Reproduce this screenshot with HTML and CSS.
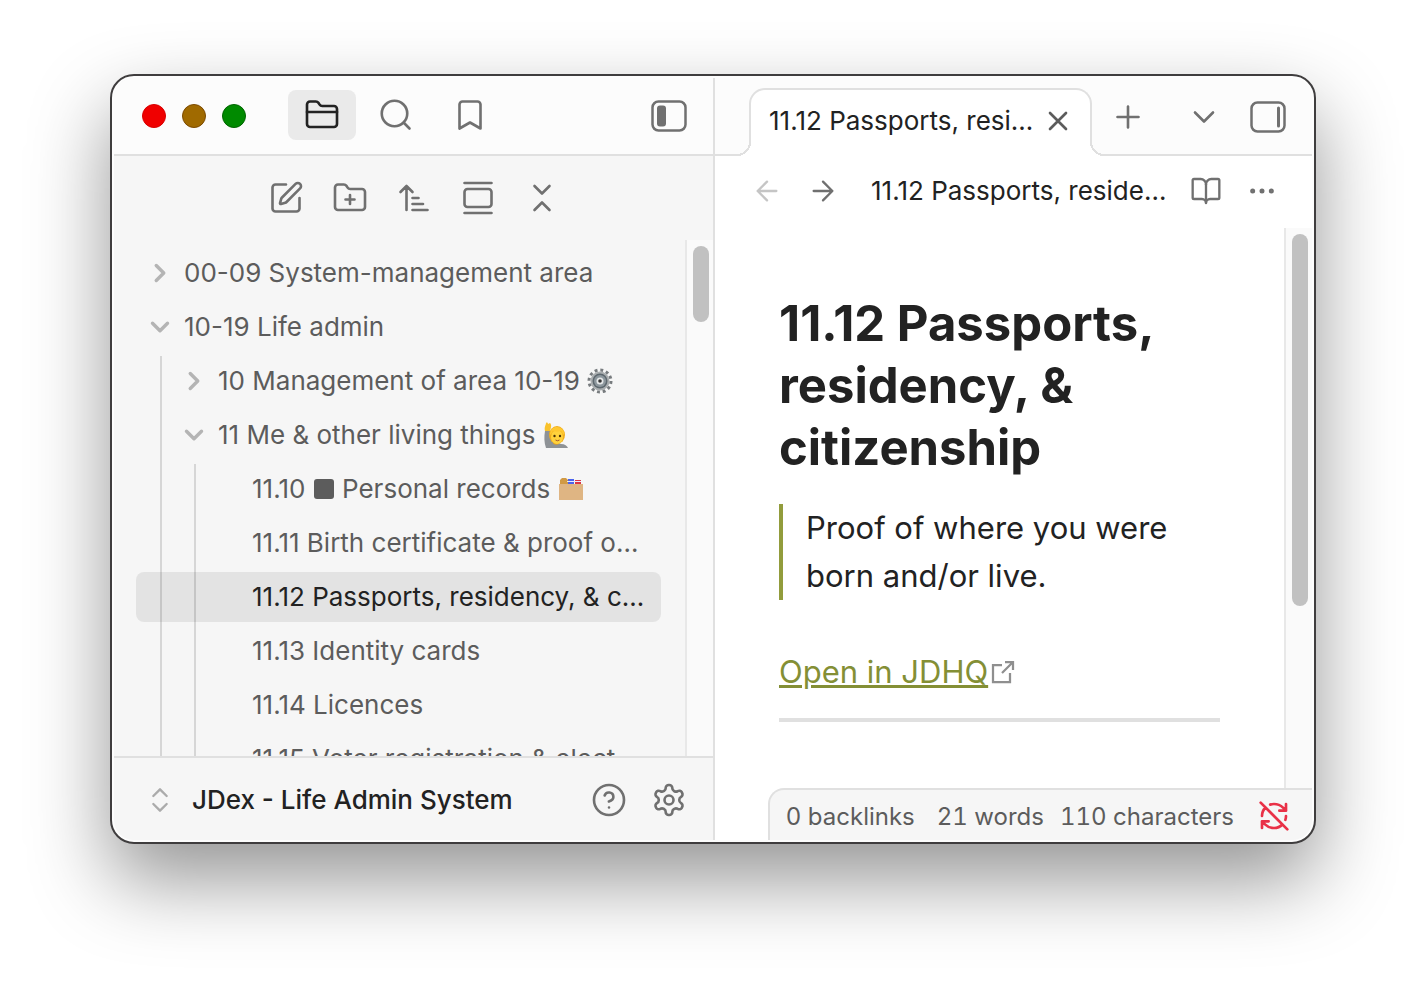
FILE: index.html
```html
<!DOCTYPE html>
<html lang="en">
<head>
<meta charset="utf-8">
<meta name="viewport" content="width=device-width, initial-scale=1">
<title>JDex - Life Admin System</title>
<link rel="stylesheet" href="styles.css">
</head>
<body>
<div class="window">
  <div class="workspace">
    <aside class="sidebar">
      <header class="bar sidebar-bar">
        <div class="lights">
          <button class="light light-close" aria-label="Close window"></button>
          <button class="light light-min" aria-label="Minimise window"></button>
          <button class="light light-zoom" aria-label="Zoom window"></button>
        </div>
        <nav class="panel-tabs" aria-label="Panels">
          <button class="panel-tab is-active" aria-label="Files"><svg class="icon" viewBox="0 0 24 24"><path d="M20 20a2 2 0 0 0 2-2V8a2 2 0 0 0-2-2h-7.900a2 2 0 0 1-1.690-.9L9.600 3.900A2 2 0 0 0 7.930 3H4a2 2 0 0 0-2 2v13a2 2 0 0 0 2 2Z"/><path d="M2 10h20"/></svg></button>
          <button class="panel-tab" aria-label="Search"><svg class="icon" viewBox="0 0 24 24"><circle cx="11" cy="11" r="8.500"/><path d="m21 21-3.800-3.800"/></svg></button>
          <button class="panel-tab" aria-label="Bookmarks"><svg class="icon" viewBox="0 0 24 24"><path d="m19 21-7-4-7 4V5a2 2 0 0 1 2-2h10a2 2 0 0 1 2 2v16z"/></svg></button>
        </nav>
        <button class="plain" aria-label="Collapse left sidebar"><svg class="icon-toggle" viewBox="0 0 36 32"><rect class="toggle-frame" x="1.500" y="1.500" width="33" height="29" rx="6"/><rect class="toggle-fill" x="6" y="5.500" width="9" height="21" rx="3"/></svg></button>
      </header>

      <div class="tools">
        <button class="plain" aria-label="New note"><svg class="icon" viewBox="0 0 24 24"><path d="M12 3H5a2 2 0 0 0-2 2v14a2 2 0 0 0 2 2h14a2 2 0 0 0 2-2v-7"/><path d="M18.375 2.625a2.121 2.121 0 1 1 3 3l-9.013 9.014a2 2 0 0 1-.853.505l-2.873.84a.5.5 0 0 1-.62-.62l.84-2.873a2 2 0 0 1 .506-.852z"/></svg></button>
        <button class="plain" aria-label="New folder"><svg class="icon" viewBox="0 0 24 24"><path d="M12 10v6M9 13h6"/><path d="M20 20a2 2 0 0 0 2-2V8a2 2 0 0 0-2-2h-7.900a2 2 0 0 1-1.690-.9L9.600 3.900A2 2 0 0 0 7.930 3H4a2 2 0 0 0-2 2v13a2 2 0 0 0 2 2Z"/></svg></button>
        <button class="plain" aria-label="Change sort order"><svg class="icon" viewBox="0 0 24 24"><path d="m3 8 4-4 4 4M7 4v16M11 12h4M11 16h7M11 20h10"/></svg></button>
        <button class="plain" aria-label="Auto-reveal current file"><svg class="icon" viewBox="0 0 24 24"><path d="M3 2h18M3 22h18"/><rect x="3" y="6" width="18" height="12" rx="2"/></svg></button>
        <button class="plain" aria-label="Collapse all"><svg class="icon" viewBox="0 0 24 24"><path d="m7 20 5-5 5 5M7 4l5 5 5-5"/></svg></button>
      </div>

      <div class="files">
        <ul class="tree">
          <li><button class="row"><svg class="chevron" viewBox="0 0 24 24"><path d="m9 18 6-6-6-6"/></svg><span class="label">00-09 System-management area</span></button></li>
          <li><button class="row"><svg class="chevron" viewBox="0 0 24 24"><path d="m6 9 6 6 6-6"/></svg><span class="label">10-19 Life admin</span></button>
            <ul class="branch level-1">
              <li><button class="row"><svg class="chevron" viewBox="0 0 24 24"><path d="m9 18 6-6-6-6"/></svg><span class="label">10 Management of area 10-19 <svg class="emoji" viewBox="0 0 26 26" role="img" aria-label="gear"><circle cx="13" cy="13" r="11" fill="none" stroke="#777b7e" stroke-width="3" stroke-dasharray="2.880 2.880"/><circle cx="13" cy="13" r="9.500" fill="#a9adaf"/><circle cx="13" cy="13" r="7.500" fill="#5d676e"/><circle cx="13" cy="13" r="6" fill="#8d979d"/><circle cx="13" cy="13" r="3.500" fill="#e6e8e9"/><circle cx="13" cy="13" r="1.800" fill="#333"/></svg></span></button></li>
              <li><button class="row"><svg class="chevron" viewBox="0 0 24 24"><path d="m6 9 6 6 6-6"/></svg><span class="label">11 Me &amp; other living things <svg class="emoji" viewBox="0 0 26 26" role="img" aria-label="person raising hand"><path d="M3 26C1 20 1 15 2 9l5-1c0 5 1 8 4 11l7 3c4 0 6 2 7 4z" fill="#8e9296"/><path d="M2 9C1 5 3 3 3 1c1-1 2 0 2 1l2-1c2 2 1 5 0 8z" fill="#f9c22b"/><path d="M10 17h6v5c-2 1-5 1-6-1z" fill="#e59c16"/><ellipse cx="14" cy="13" rx="8" ry="9" fill="#f0ad1c"/><ellipse cx="14" cy="15" rx="6" ry="7" fill="#ffd23c"/><path d="M7 13c0-6 3-8 7-8s8 3 7 8c-2-1-2-3-3-4-3 1-6 1-8 0-1 1-1 3-3 4z" fill="#ffc830"/><circle cx="11.500" cy="14" r="1.200" fill="#4a3208"/><circle cx="17" cy="14" r="1.200" fill="#4a3208"/><path d="M12.500 18q2 1.500 4 0" fill="none" stroke="#a0522d"/></svg></span></button>
                <ul class="branch level-2">
                  <li><a class="row" href="#11.10"><span class="label">11.10 <svg class="square" viewBox="0 0 20 20" role="img" aria-label="black square"><rect width="20" height="20" rx="3"/></svg> Personal records <svg class="emoji" viewBox="0 0 26 26" role="img" aria-label="card index dividers"><path d="M2 7V4l2-2h4l2 2v4H2z" fill="#d19a45"/><path d="M10 3h6v5h-6z" fill="#4a63ee"/><path d="M17 4h6v5h-6z" fill="#dc3545"/><path d="M9 5h14v1H9z" fill="#e8eafc"/><path d="M1 8h24v16H1z" fill="#dfb583"/></svg></span></a></li>
                  <li><a class="row" href="#11.11"><span class="label">11.11 Birth certificate &amp; proof o…</span></a></li>
                  <li><a class="row is-selected" href="#11.12" aria-current="page"><span class="label">11.12 Passports, residency, &amp; c…</span></a></li>
                  <li><a class="row" href="#11.13"><span class="label">11.13 Identity cards</span></a></li>
                  <li><a class="row" href="#11.14"><span class="label">11.14 Licences</span></a></li>
                  <li><a class="row" href="#11.15"><span class="label">11.15 Voter registration &amp; elect…</span></a></li>
                </ul>
              </li>
            </ul>
          </li>
        </ul>
        <div class="track"><div class="thumb thumb-files"></div></div>
      </div>

      <footer class="vault">
        <button class="vault-name"><svg class="icon-small icon-faint" viewBox="0 0 24 24"><path d="m7 15 5 5 5-5M7 9l5-5 5 5"/></svg><span class="label">JDex - Life Admin System</span></button>
        <button class="plain" aria-label="Help"><svg class="icon" viewBox="0 0 24 24"><circle cx="12" cy="12" r="10"/><path d="M9.090 9a3 3 0 0 1 5.830 1c0 2-3 3-3 3M12 17h.01"/></svg></button>
        <button class="plain" aria-label="Settings"><svg class="icon" viewBox="0 0 24 24"><path d="M12.220 2h-.44a2 2 0 0 0-2 2v.18a2 2 0 0 1-1 1.730l-.43.25a2 2 0 0 1-2 0l-.15-.08a2 2 0 0 0-2.730.73l-.22.38a2 2 0 0 0 .73 2.730l.15.1a2 2 0 0 1 1 1.720v.51a2 2 0 0 1-1 1.740l-.15.09a2 2 0 0 0-.73 2.730l.22.38a2 2 0 0 0 2.730.73l.15-.08a2 2 0 0 1 2 0l.43.25a2 2 0 0 1 1 1.730V20a2 2 0 0 0 2 2h.44a2 2 0 0 0 2-2v-.18a2 2 0 0 1 1-1.730l.43-.25a2 2 0 0 1 2 0l.15.08a2 2 0 0 0 2.730-.73l.22-.39a2 2 0 0 0-.73-2.730l-.15-.08a2 2 0 0 1-1-1.740v-.5a2 2 0 0 1 1-1.740l.15-.09a2 2 0 0 0 .73-2.730l-.22-.38a2 2 0 0 0-2.730-.73l-.15.08a2 2 0 0 1-2 0l-.43-.25a2 2 0 0 1-1-1.730V4a2 2 0 0 0-2-2z"/><circle cx="12" cy="12" r="3"/></svg></button>
      </footer>
    </aside>

    <main class="main">
      <header class="bar main-bar">
        <div class="tab">
          <span class="tab-title">11.12 Passports, resi…</span>
          <button class="plain tab-close" aria-label="Close tab"><svg class="icon-small" viewBox="0 0 24 24"><path d="M18 6 6 18M6 6l12 12"/></svg></button>
        </div>
        <button class="plain" aria-label="New tab"><svg class="icon" viewBox="0 0 24 24"><path d="M5 12h14M12 5v14"/></svg></button>
        <div class="bar-end">
          <button class="plain" aria-label="Tab list"><svg class="icon" viewBox="0 0 24 24"><path d="m6 9 6 6 6-6"/></svg></button>
          <button class="plain" aria-label="Expand right sidebar"><svg class="icon-toggle" viewBox="0 0 36 32"><rect class="toggle-frame" x="1.500" y="1.500" width="33" height="29" rx="6"/><rect class="toggle-fill" x="27" y="5.500" width="3" height="21" rx="1.500"/></svg></button>
        </div>
      </header>

      <div class="view-bar">
        <button class="plain is-disabled" aria-label="Back"><svg class="icon-small" viewBox="0 0 24 24"><path d="m12 19-7-7 7-7M19 12H5"/></svg></button>
        <button class="plain" aria-label="Forward"><svg class="icon-small" viewBox="0 0 24 24"><path d="M5 12h14M12 5l7 7-7 7"/></svg></button>
        <span class="view-title">11.12 Passports, reside…</span>
        <button class="plain" aria-label="Reading view"><svg class="icon-small" viewBox="0 0 24 24"><path d="M12 7v14"/><path d="M3 18a1 1 0 0 1-1-1V4a1 1 0 0 1 1-1h5a4 4 0 0 1 4 4 4 4 0 0 1 4-4h5a1 1 0 0 1 1 1v13a1 1 0 0 1-1 1h-6a3 3 0 0 0-3 3 3 3 0 0 0-3-3z"/></svg></button>
        <button class="plain" aria-label="More options"><svg class="icon-small" viewBox="0 0 24 24"><circle cx="5" cy="12" r="1"/><circle cx="12" cy="12" r="1"/><circle cx="19" cy="12" r="1"/></svg></button>
      </div>

      <div class="view">
        <article class="note">
          <h1>11.12 Passports, residency, &amp; citizenship</h1>
          <blockquote>Proof of where you were born and/or live.</blockquote>
          <p><a class="external" href="#jdhq">Open in JDHQ</a><svg class="icon-external" viewBox="0 0 24 24"><path d="M11 5H2v17h17v-9M14 2h8v8M22 2 11 13"/></svg></p>
          <hr>
        </article>
        <div class="track"><div class="thumb thumb-note"></div></div>
      </div>

      <div class="status">
        <span>0 backlinks</span>
        <span class="words">21 words</span>
        <span>110 characters</span>
        <button class="plain sync" aria-label="Sync is off"><svg class="icon-small" viewBox="0 0 24 24"><path d="M21 8l-2.260-2.260A9.750 9.750 0 0 0 12 3c-1 0-1.970.16-2.870.47M8 16H3v5M3 12c0-2.490 1-4.740 2.640-6.360M3 16l2.260 2.260A9.750 9.750 0 0 0 12 21c2.490 0 4.740-1 6.360-2.640M21 12c0 1-.16 1.970-.47 2.870M21 3v5h-5M22 22 2 2"/></svg></button>
      </div>
    </main>
  </div>
</div>
</body>
</html>
```

FILE: styles.css
```css
* { box-sizing: border-box; }

:root {
  --line: #e0e0e0;
  --bar: #fcfcfc;
  --panel: #f6f6f6;
  --text: #222;
  --muted: #5c5c5c;
  --icon: #707070;
  --faint: #ababab;
  --accent: #848f35;
}

body {
  margin: 0;
  min-height: 100vh;
  padding: 74px 110px 146px;
  display: flex;
  background: #fff;
  color: var(--text);
  font-family: Inter, "Liberation Sans", sans-serif;
  font-size: 26px;
}

button {
  border: 0;
  padding: 0;
  background: none;
  color: inherit;
  font: inherit;
  text-align: left;
}

a { color: inherit; text-decoration: none; }

ul { margin: 0; padding: 0; list-style: none; }

.window {
  flex: 1;
  min-width: 0;
  display: flex;
  padding: 2px;
  border: 2px solid #3f3d3e;
  border-radius: 24px;
  background: #fdfdfd;
  box-shadow: 0 36px 80px rgba(0, 0, 0, 0.42);
}

.workspace {
  flex: 1;
  min-width: 0;
  display: flex;
  overflow: hidden;
  border-radius: 20px;
}

/* Icons */
.icon, .icon-small, .chevron, .icon-external {
  display: block;
  flex: none;
  fill: none;
  stroke: currentColor;
  stroke-width: 1.75;
  stroke-linecap: round;
  stroke-linejoin: round;
}
.icon { width: 36px; height: 36px; }
.icon-small { width: 32px; height: 32px; }
.icon-faint { color: var(--faint); }
.icon-toggle { display: block; width: 36px; height: 32px; }
.toggle-frame { fill: none; stroke: currentColor; stroke-width: 2.5; }
.toggle-fill { fill: currentColor; }
.plain { flex: none; color: var(--icon); }

/* Sidebar */
.sidebar {
  flex: 0 1 601px;
  min-width: 0;
  display: flex;
  flex-direction: column;
  border-right: 2px solid var(--line);
  background: var(--panel);
}

.bar {
  flex: none;
  height: 78px;
  display: flex;
  align-items: center;
  border-bottom: 2px solid var(--line);
  background: var(--bar);
}

.sidebar-bar { padding: 0 26px 0 28px; }

.lights { display: flex; gap: 16px; }
.light { width: 24px; height: 24px; border-radius: 50%; border: 1px solid; }
.light-close { background: #f00000; border-color: #d80000; }
.light-min { background: #a06a00; border-color: #7c4a00; }
.light-zoom { background: #008a00; border-color: #006400; }

.panel-tabs { display: flex; gap: 6px; margin: 0 auto 2px 42px; }
.panel-tab { padding: 7px 16px; border-radius: 8px; color: var(--icon); }
.panel-tab.is-active { background: #eaeaea; color: var(--text); }

.tools {
  flex: none;
  height: 84px;
  display: flex;
  justify-content: center;
  align-items: center;
  gap: 28px;
}

.files {
  flex: 1;
  min-height: 0;
  display: flex;
  overflow: hidden;
  border-bottom: 2px solid var(--line);
}

.tree {
  flex: 1;
  min-width: 0;
  height: 0;
  padding: 8px 24px 0 22px;
}
.tree li + li, .branch { margin-top: 4px; }

.row {
  display: flex;
  align-items: center;
  width: 100%;
  height: 50px;
  padding-left: 9px;
  border-radius: 8px;
  color: var(--muted);
}
.row.is-selected { background: rgba(0, 0, 0, 0.075); color: var(--text); }
.chevron { width: 30px; height: 30px; margin-right: 9px; color: #b4b4b4; stroke-width: 2.75; }
.label { padding-bottom: 2px; white-space: nowrap; }
.level-1 .row { padding-left: 43px; }
.level-2 .row { padding-left: 116px; }

.branch { position: relative; }
.branch::before {
  content: "";
  position: absolute;
  top: 0;
  bottom: 0;
  left: 24px;
  width: 2px;
  background: rgba(0, 0, 0, 0.13);
}
.level-2::before { left: 58px; }

.emoji { width: 26px; height: 26px; vertical-align: -4px; }
.square { width: 20px; height: 20px; margin: 0 1px; vertical-align: -1px; fill: var(--muted); }

.track {
  flex: none;
  width: 28px;
  padding: 6px;
  border-left: 2px solid #e8e8e8;
  background: #fafafa;
}
.thumb { width: 16px; border-radius: 8px; background: #c1c1c1; }
.thumb-files { height: 15%; }

.vault {
  flex: none;
  height: 82px;
  display: flex;
  align-items: center;
  gap: 24px;
  padding: 2px 26px 0 30px;
}
.vault-name {
  flex: 1;
  display: flex;
  align-items: center;
  gap: 16px;
  font-weight: 500;
}

/* Main pane */
.main {
  flex: 1;
  min-width: 0;
  position: relative;
  display: flex;
  flex-direction: column;
  background: #fff;
}

.main-bar { padding: 2px 26px 0 34px; }

.tab {
  position: relative;
  align-self: stretch;
  flex: 0 1 343px;
  min-width: 0;
  display: flex;
  align-items: center;
  justify-content: space-between;
  margin: 8px 18px -2px 0;
  padding: 0 16px 4px 18px;
  border: 2px solid var(--line);
  border-bottom: 0;
  border-radius: 16px 16px 0 0;
  background: #fff;
}
.tab::before, .tab::after {
  content: "";
  position: absolute;
  bottom: 0;
  width: 14px;
  height: 14px;
}
.tab::before {
  left: -14px;
  background: radial-gradient(circle at 0 0, var(--bar) 12px, var(--line) 12px, var(--line) 14px, #fff 14px);
}
.tab::after {
  right: -14px;
  background: radial-gradient(circle at 100% 0, var(--bar) 12px, var(--line) 12px, var(--line) 14px, #fff 14px);
}
.tab-title, .view-title { padding-bottom: 2px; white-space: nowrap; overflow: hidden; }
.tab-close { color: var(--muted); }
.tab-close .icon-small { stroke-width: 2; }

.bar-end { display: flex; align-items: center; gap: 28px; margin-left: auto; }

.view-bar {
  flex: none;
  height: 72px;
  display: flex;
  align-items: center;
  gap: 24px;
  padding: 0 34px 2px 36px;
}
.view-title { flex: 1; margin-left: 8px; }
.is-disabled { opacity: 0.4; }

.view { flex: 1; min-height: 0; display: flex; overflow: hidden; }

.note {
  flex: 1;
  min-width: 0;
  padding: 65px 64px 0;
  font-size: 31px;
  line-height: 48px;
}
.note h1 {
  margin: 0 0 25px;
  font-size: 49px;
  line-height: 62px;
  font-weight: 700;
}
.note blockquote {
  margin: 0 0 48px;
  padding-left: 23px;
  border-left: 4px solid #929c3c;
}
.note p { display: flex; align-items: center; gap: 3px; margin: 0; }
.external {
  color: var(--accent);
  text-decoration: underline;
  text-decoration-thickness: 3px;
}
.icon-external {
  width: 24px;
  height: 24px;
  color: #8f8f8f;
  stroke-width: 2.25;
  stroke-linecap: butt;
  stroke-linejoin: miter;
}
.note hr { margin: 22px 0 0; border: 0; height: 4px; background: var(--line); }

.thumb-note { height: 62%; }

.status {
  position: absolute;
  right: 0;
  bottom: 0;
  height: 52px;
  display: flex;
  align-items: center;
  gap: 16px;
  padding: 2px 22px 0 16px;
  border: 2px solid var(--line);
  border-width: 2px 0 0 2px;
  border-radius: 16px 0 0 0;
  background: var(--panel);
  color: var(--muted);
  font-size: 24px;
  font-variant-numeric: tabular-nums;
  white-space: nowrap;
}
.words { margin-left: 6px; }
.sync { margin-left: 8px; color: #e93147; }
.sync .icon-small { stroke-width: 2; }
```
